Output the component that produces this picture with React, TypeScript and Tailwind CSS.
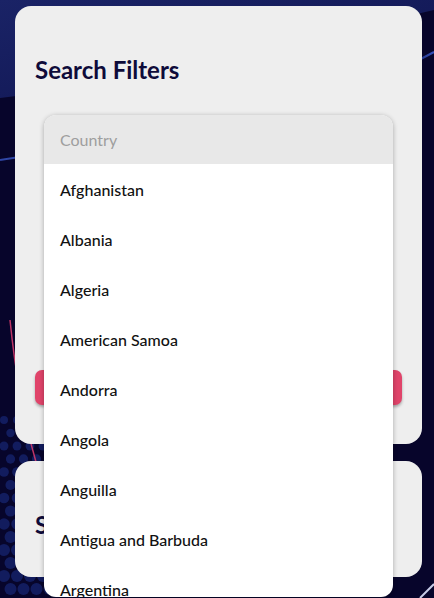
import React from "react";

const countries = [
  "Afghanistan",
  "Albania",
  "Algeria",
  "American Samoa",
  "Andorra",
  "Angola",
  "Anguilla",
  "Antigua and Barbuda",
  "Argentina",
];

function Background() {
  const dots: { x: number; y: number; r: number }[] = [];
  for (let row = 0; row < 14; row++) {
    for (let col = 0; col < 4; col++) {
      const x = 4 + col * 13 + (row % 2 ? 6.5 : 0);
      const y = 420 + row * 13;
      const r = 4 + Math.min(2, (y - 420) / 60);
      dots.push({ x, y, r });
    }
  }
  return (
    <svg className="absolute inset-0 h-full w-full" viewBox="0 0 434 598" preserveAspectRatio="none">
      <defs>
        <linearGradient id="tl" x1="0" y1="0" x2="1" y2="1">
          <stop offset="0" stopColor="#1a2366" />
          <stop offset="1" stopColor="#0f1450" />
        </linearGradient>
        <linearGradient id="line" x1="0" y1="0" x2="1" y2="0">
          <stop offset="0" stopColor="#2a47a8" stopOpacity="0.2" />
          <stop offset="1" stopColor="#3c5bd0" stopOpacity="0.9" />
        </linearGradient>
      </defs>
      <rect width="434" height="598" fill="#07052b" />
      <path d="M0 0 L434 0 L434 10 C300 40 150 80 0 98 Z" fill="url(#tl)" />
      <path d="M0 160 C10 158 20 157 44 154" stroke="#3a56c4" strokeWidth="2" fill="none" opacity="0.8" />
      <path d="M400 70 L434 52" stroke="url(#line)" strokeWidth="2" fill="none" />
      <g fill="#142168" opacity="0.85">
        {dots.map((d, i) => (
          <circle key={i} cx={d.x} cy={d.y} r={d.r} />
        ))}
      </g>
      <path d="M10 320 C16 380 24 420 36 462" stroke="#d33a6c" strokeWidth="1.5" fill="none" opacity="0.9" />
      <path d="M420 598 L434 584" stroke="#c8cde8" strokeWidth="2" fill="none" />
    </svg>
  );
}

export default function App() {
  return (
    <div
      className="relative h-[598px] w-[434px] overflow-hidden"
      style={{ fontFamily: "Lato, 'Open Sans', sans-serif" }}
    >
      <Background />
      <div className="relative flex flex-col gap-[17px] pl-[15px] pr-[12px] pt-[6px]">
        <div className="relative h-[438px] rounded-[16px] bg-[#eeeeee] px-[20px] pt-[48px]">
          <h2 className="text-[24px] font-bold leading-[32px] text-[#0e0b3a]">Search Filters</h2>
          <div className="absolute left-[20px] right-[20px] top-[364px] h-[35px] rounded-[7px] bg-[#e0446a] shadow-[0_2px_3px_rgba(0,0,0,0.3)]" />
        </div>
        <div className="h-[116px] rounded-[16px] bg-[#eeeeee] px-[20px] pt-[48px]">
          <h2 className="text-[24px] font-bold leading-[32px] text-[#0e0b3a]">Search Results</h2>
        </div>
      </div>
      <div className="absolute left-[44px] top-[115px] h-[482px] w-[349px] overflow-hidden rounded-[12px] bg-white shadow-[0_1px_5px_rgba(0,0,0,0.3)]">
        <div className="flex h-[49px] items-center bg-[#e8e8e8] px-[16px] text-[16px] text-[#9e9e9e]">Country</div>
        {countries.map((c) => (
          <div key={c} className="flex h-[50px] items-center px-[16px] pt-[2px] text-[16px] font-medium text-[#111111]">
            {c}
          </div>
        ))}
      </div>
    </div>
  );
}
